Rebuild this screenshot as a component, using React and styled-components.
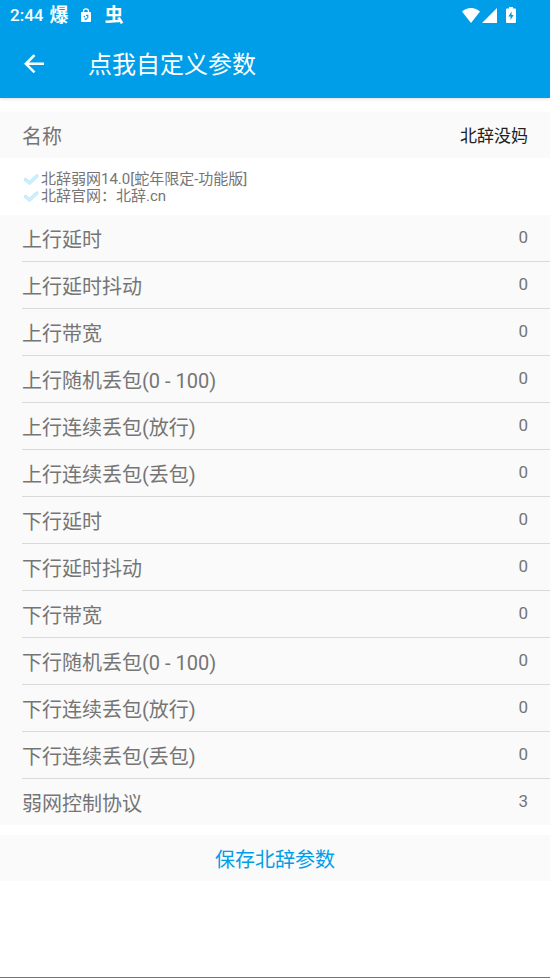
import { useState } from 'react';
import styled, { createGlobalStyle } from 'styled-components';

const GlobalStyle = createGlobalStyle`
  * {
    box-sizing: border-box;
  }

  body {
    margin: 0;
    background-color: #ffffff;
    color: #757575;
    font-family: Roboto, "Noto Sans CJK SC", sans-serif;
  }
`;

const Page = styled.div`
  min-height: 100vh;
  border-bottom: 1px solid #757575;
`;

const Header = styled.header`
  background-color: #009ee9;
  color: #ffffff;
  box-shadow: 0 1px 3px rgba(0, 0, 0, 0.14);
`;

const StatusBar = styled.div`
  height: 30px;
  padding: 0 34px 0 10px;
  display: flex;
  align-items: center;
  justify-content: space-between;
`;

const StatusGroup = styled.div`
  display: flex;
  align-items: center;
  gap: ${props => props.$gap};
`;

const Clock = styled.span`
  font-size: 17px;
  font-weight: 500;
  line-height: 30px;
`;

const AppMark = styled.span`
  padding-top: 2px;
  font-size: 19px;
  font-weight: 700;
  line-height: 28px;
`;

const Toolbar = styled.div`
  height: 68px;
  padding: 0 22px;
  display: flex;
  align-items: center;
  gap: 42px;
`;

const BackButton = styled.button`
  height: 24px;
  width: 24px;
  padding: 0;
  border: none;
  background: none;
  color: inherit;
  cursor: pointer;
`;

const Title = styled.h1`
  margin: 0;
  padding-top: 2px;
  font-size: 24px;
  font-weight: 400;
  line-height: 32px;
`;

const Form = styled.form`
  margin: 14px 0 0;
`;

const Row = styled.div`
  padding-left: 22px;
  background-color: #fafafa;
`;

const RowInner = styled.div`
  height: ${props => (props.$divider ? '47px' : '46px')};
  padding-right: 22px;
  border-bottom: ${props => (props.$divider ? '1px solid #dadada' : 'none')};
  display: flex;
  align-items: center;
`;

const Label = styled.label`
  flex: none;
  padding-top: 3px;
  font-size: 20px;
  line-height: 28px;
`;

const Input = styled.input`
  flex: 1;
  min-width: 0;
  height: 28px;
  padding: 0 0 2px;
  border: none;
  outline: none;
  background: none;
  color: ${props => (props.$dark ? '#212121' : '#757575')};
  font-family: inherit;
  font-size: 17px;
  text-align: right;
`;

const Notes = styled.div`
  padding: 13px 22px 10px;
`;

const Note = styled.p`
  height: 17px;
  margin: 0;
  display: flex;
  align-items: center;
  gap: 1px;
  font-size: 15px;
  line-height: 17px;
`;

const SaveButton = styled.button`
  width: 100%;
  height: 46px;
  margin-top: 10px;
  padding: 3px 0 0;
  border: none;
  background-color: #fafafa;
  color: #009ee9;
  font-family: inherit;
  font-size: 20px;
  line-height: 28px;
  cursor: pointer;
`;

const fields = [
  { id: 'upDelay', label: '上行延时', value: '0' },
  { id: 'upJitter', label: '上行延时抖动', value: '0' },
  { id: 'upBandwidth', label: '上行带宽', value: '0' },
  { id: 'upRandomLoss', label: '上行随机丢包(0 - 100)', value: '0' },
  { id: 'upBurstPass', label: '上行连续丢包(放行)', value: '0' },
  { id: 'upBurstLoss', label: '上行连续丢包(丢包)', value: '0' },
  { id: 'downDelay', label: '下行延时', value: '0' },
  { id: 'downJitter', label: '下行延时抖动', value: '0' },
  { id: 'downBandwidth', label: '下行带宽', value: '0' },
  { id: 'downRandomLoss', label: '下行随机丢包(0 - 100)', value: '0' },
  { id: 'downBurstPass', label: '下行连续丢包(放行)', value: '0' },
  { id: 'downBurstLoss', label: '下行连续丢包(丢包)', value: '0' },
  { id: 'protocol', label: '弱网控制协议', value: '3' },
];

const LockIcon = () => (
  <svg width="12" height="15" viewBox="0 0 12 15" aria-hidden="true">
    <path d="M3.500 5V3.400a2.500 2.500 0 0 1 5 0V5" fill="none" stroke="#fff" strokeWidth="1.300" />
    <rect x="1" y="4" width="10" height="10" rx="1" fill="#fff" />
    <path d="M3.800 8l1 1M6 7.400h1.800v2.200L5.800 11.600 4.600 10.500" fill="none" stroke="#009ee9" strokeWidth="1.100" />
  </svg>
);

const WifiIcon = () => (
  <svg width="18" height="15" viewBox="0 0 18 15" aria-hidden="true">
    <path d="M9 15L0 3.600C2.600 1.300 5.600 0 9 0s6.400 1.300 9 3.600z" fill="#fff" />
  </svg>
);

const SignalIcon = () => (
  <svg width="15" height="15" viewBox="0 0 15 15" aria-hidden="true">
    <path d="M15 0v15H0z" fill="#fff" />
  </svg>
);

const BatteryIcon = () => (
  <svg width="10" height="16" viewBox="0 0 10 16" aria-hidden="true">
    <path d="M3 0h4v1.600h2a1 1 0 0 1 1 1V15a1 1 0 0 1-1 1H1a1 1 0 0 1-1-1V2.600a1 1 0 0 1 1-1h2z" fill="#fff" />
    <path d="M5.600 4.500L2.300 9.600h2.200v3.400l3.200-5H5.600z" fill="#009ee9" />
  </svg>
);

const BackIcon = () => (
  <svg width="24" height="24" viewBox="0 0 24 24" aria-hidden="true">
    <path d="M12.500 3.200L3.900 11.800l8.600 8.600M3.900 11.800H22" fill="none" stroke="#fff" strokeWidth="2.600" />
  </svg>
);

const CheckIcon = () => (
  <svg width="18" height="13" viewBox="0 0 18 13" aria-hidden="true">
    <path d="M3.500 6.500L7.500 10l7.500-7" fill="none" stroke="#b4e6fa" strokeWidth="3.200" strokeLinecap="round" strokeLinejoin="round" />
    <path d="M3.500 6.500L7.500 10l7.500-7" fill="none" stroke="#cff1fd" strokeWidth="1.800" strokeLinecap="round" strokeLinejoin="round" />
  </svg>
);

const Field = ({ id, label, value, onChange, divider, dark }) => (
  <Row>
    <RowInner $divider={divider}>
      <Label htmlFor={id}>{label}</Label>
      <Input id={id} type="text" value={value} onChange={onChange} $dark={dark} />
    </RowInner>
  </Row>
);

const App = () => {
  const [name, setName] = useState('北辞没妈');
  const [values, setValues] = useState(
    Object.fromEntries(fields.map(field => [field.id, field.value]))
  );

  return (
    <Page>
      <GlobalStyle />
      <Header>
        <StatusBar>
          <StatusGroup $gap="6px">
            <Clock>2:44</Clock>
            <StatusGroup $gap="12px">
              <AppMark>爆</AppMark>
              <LockIcon />
              <AppMark>虫</AppMark>
            </StatusGroup>
          </StatusGroup>
          <StatusGroup $gap="9px">
            <StatusGroup $gap="2px">
              <WifiIcon />
              <SignalIcon />
            </StatusGroup>
            <BatteryIcon />
          </StatusGroup>
        </StatusBar>
        <Toolbar>
          <BackButton type="button" aria-label="返回">
            <BackIcon />
          </BackButton>
          <Title>点我自定义参数</Title>
        </Toolbar>
      </Header>
      <Form onSubmit={e => e.preventDefault()}>
        <Field
          id="name"
          label="名称"
          value={name}
          onChange={e => setName(e.target.value)}
          dark
        />
        <Notes>
          <Note><CheckIcon />北辞弱网14.0[蛇年限定-功能版]</Note>
          <Note><CheckIcon />北辞官网：北辞.cn</Note>
        </Notes>
        {fields.map((field, index) => (
          <Field
            key={field.id}
            id={field.id}
            label={field.label}
            value={values[field.id]}
            onChange={e => setValues({ ...values, [field.id]: e.target.value })}
            divider={index < fields.length - 1}
          />
        ))}
        <SaveButton type="submit">保存北辞参数</SaveButton>
      </Form>
    </Page>
  );
};

export default App;
